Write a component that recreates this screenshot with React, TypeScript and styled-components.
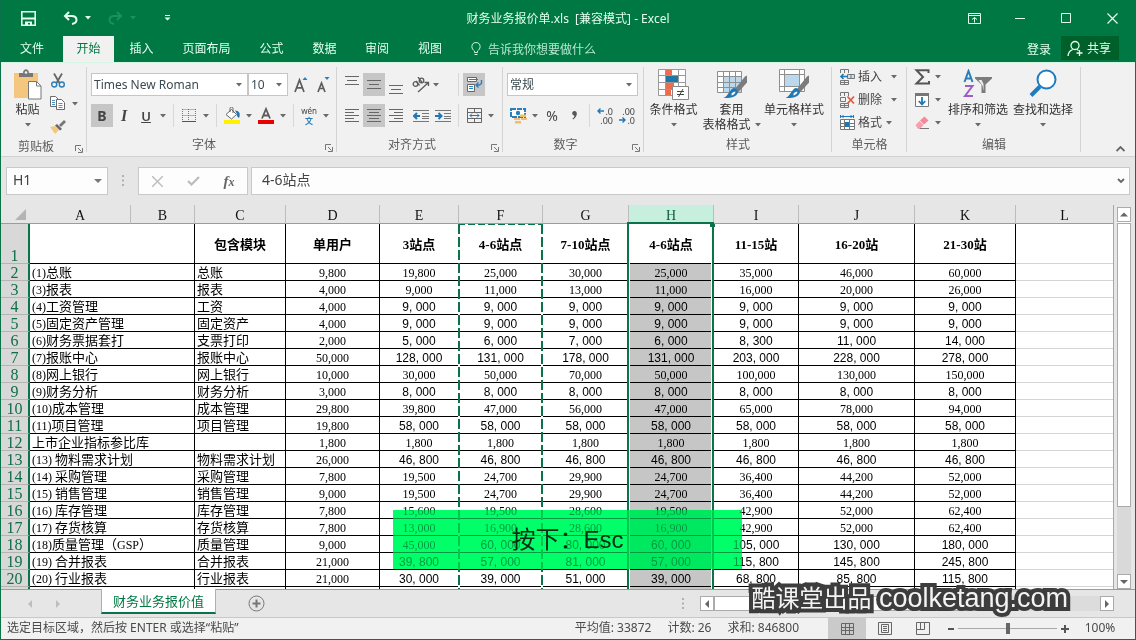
import React from "react";
import styled, { createGlobalStyle, css } from "styled-components";

const green = "#007843";
const deepGreen = "#0a7349";
const uiFont = `"Noto Sans", "Noto Sans CJK SC", sans-serif`;
const sheetFont = `"Liberation Serif", "Noto Sans CJK SC", serif`;

const GlobalStyle = createGlobalStyle`
  * { box-sizing: border-box; }
  body { margin: 0; font-family: ${uiFont}; font-size: 12px; color: #444; }
  button, input, select { font: inherit; color: inherit; margin: 0; padding: 0; border: 0; background: none; outline: none; }
  svg { display: block; flex: none; }
`;

/* ---------- window frame ---------- */

const Window = styled.div`
  position: relative;
  display: flex;
  flex-direction: column;
  height: 100vh;
  overflow: hidden;
  border: solid ${deepGreen};
  border-width: 0 1px 1px;
  background: #e6e6e6;
`;

const TitleBar = styled.header`
  display: grid;
  grid-template-columns: 1fr auto 1fr;
  align-items: center;
  height: 36px;
  flex: none;
  background: ${green};
  color: #e4fff0;
`;

const QuickAccess = styled.div`
  display: flex;
  align-items: center;
  padding-left: 19px;
`;

const Title = styled.h1`
  margin: 0;
  font-size: 12px;
  font-weight: 400;
  white-space: pre;
`;

const WindowButtons = styled.div`
  display: flex;
  justify-content: flex-end;
`;

const WindowButton = styled.button<{ $w?: number }>`
  display: flex;
  align-items: center;
  justify-content: center;
  width: ${(p) => p.$w ?? 46}px;
  height: 32px;
`;

const TabBar = styled.nav`
  display: flex;
  align-items: stretch;
  height: 26px;
  flex: none;
  padding-right: 16px;
  background: ${green};
  color: #e4fff0;
`;

const RibbonTab = styled.button<{ $active?: boolean; $w: number }>`
  width: ${(p) => p.$w}px;
  line-height: 24px;
  ${(p) => p.$active && css`background: #f1f1f1; color: ${green};`}
`;

const TellMe = styled.button`
  display: flex;
  align-items: center;
  gap: 7px;
  padding-left: 15px;
  color: #b5e8cf;
`;

const Account = styled.div`
  display: flex;
  margin-left: auto;
  gap: 10px;
`;

const ShareButton = styled.button`
  display: flex;
  align-items: center;
  gap: 3px;
  width: 58px;
  height: 24px;
  padding-left: 6px;
  background: #006029;
`;

/* ---------- ribbon ---------- */

const Ribbon = styled.section`
  display: flex;
  flex: none;
  height: 95px;
  border-top: 1px solid #d5f5e5;
  border-bottom: 1px solid #d2d2d2;
  background: #f1f1f1;
`;

const GroupBox = styled.div<{ $w: number }>`
  position: relative;
  display: flex;
  flex-direction: column;
  width: ${(p) => p.$w}px;
  flex: none;
  &::after {
    content: "";
    position: absolute;
    right: 0;
    top: 4px;
    bottom: 4px;
    width: 1px;
    background: #d4d4d4;
  }
`;

const GroupBody = styled.div<{ $top: number; $left?: number }>`
  display: flex;
  flex: 1;
  padding: ${(p) => p.$top}px 0 0 ${(p) => p.$left ?? 4}px;
`;

const GroupFooter = styled.div`
  display: flex;
  height: 20px;
  text-align: center;
  line-height: 18px;
  color: #5c5c5c;
  & > span { flex: 1; }
  & > button { width: 16px; padding: 3px 0 0 4px; }
`;

const Rows = styled.div<{ $gap?: number }>`
  display: flex;
  flex-direction: column;
  gap: ${(p) => p.$gap ?? 0}px;
`;

const Row = styled.div<{ $w?: number }>`
  display: flex;
  height: 23px;
  width: ${(p) => (p.$w ? p.$w + "px" : "auto")};
`;

const Cluster = styled.div<{ $left?: number }>`
  display: flex;
  margin-left: ${(p) => p.$left ?? 0}px;
`;

const EndCluster = styled.div`
  display: flex;
  width: 44px;
  margin-left: auto;
`;

const Tool = styled.button<{ $w?: number; $on?: boolean; $gap?: number }>`
  display: flex;
  align-items: center;
  justify-content: center;
  gap: ${(p) => p.$gap ?? 0}px;
  width: ${(p) => p.$w ?? 22}px;
  height: 23px;
  background: ${(p) => (p.$on ? "#c6c6c6" : "transparent")};
`;

const Divider = styled.span`
  width: 1px;
  height: 23px;
  margin: 0 4px;
  background: #d8d8d8;
`;

const LabelTool = styled.button<{ $gap: number }>`
  display: flex;
  align-items: center;
  height: 23px;
  gap: 3px;
  line-height: 16px;
  & > :last-child { margin-left: ${(p) => p.$gap}px; }
`;

const BigTool = styled.button<{ $w: number }>`
  display: flex;
  flex-direction: column;
  align-items: center;
  width: ${(p) => p.$w}px;
  height: 64px;
  line-height: 15px;
  white-space: nowrap;
  color: #333;
`;

const BigIcon = styled.span`
  display: flex;
  height: 33px;
`;

const BigLine = styled.span`
  display: flex;
  align-items: center;
  gap: 4px;
  height: 15px;
`;

const FindTools = styled.div`
  display: flex;
  gap: 5px;
  padding-top: 4px;
  margin-left: 7px;
`;

const Glyph = styled.span<{ $kind?: "bold" | "italic" | "underline" }>`
  font-size: 14px;
  line-height: 20px;
  ${(p) => p.$kind === "bold" && css`font-weight: 700;`}
  ${(p) => p.$kind === "italic" && css`font: italic 700 16px/20px "Liberation Serif", serif;`}
  ${(p) => p.$kind === "underline" && css`font-weight: 600; text-decoration: underline; font-size: 13px;`}
`;

const SelectFrame = styled.span<{ $w: number }>`
  display: grid;
  grid-template-columns: 1fr 16px;
  align-items: center;
  width: ${(p) => p.$w}px;
  height: 23px;
  border: 1px solid #c6c6c6;
  background: #fff;
  & > select {
    grid-area: 1 / 1 / 2 / 3;
    appearance: none;
    width: 100%;
    height: 21px;
    padding-left: 2px;
    color: #3c4a52;
  }
  & > svg { grid-area: 1 / 2; pointer-events: none; justify-self: center; }
`;

const CollapseButton = styled.button`
  margin: auto 10px 4px auto;
`;

/* ---------- formula bar ---------- */

const FormulaBar = styled.section`
  display: flex;
  align-items: center;
  flex: none;
  height: 48px;
  padding: 0 5px;
  color: #444;
`;

const Field = styled.div<{ $w?: number }>`
  display: flex;
  align-items: center;
  height: 28px;
  width: ${(p) => (p.$w ? p.$w + "px" : "auto")};
  flex: ${(p) => (p.$w ? "none" : "1")};
  border: 1px solid #c9c9c9;
  background: #fdfdfd;
  & > input {
    flex: 1;
    min-width: 0;
    padding-bottom: 2px;
    font-size: 14px;
    line-height: 22px;
  }
`;

const NameInput = styled.input`
  padding-left: 6px;
`;

const FormulaInput = styled.input`
  padding-left: 10px;
`;

const Grip = styled.span<{ $w: number }>`
  display: flex;
  justify-content: center;
  width: ${(p) => p.$w}px;
`;

/* ---------- worksheet ---------- */

const SheetArea = styled.main`
  display: flex;
  flex: 1;
  min-height: 0;
`;

const SheetView = styled.div`
  flex: 1;
  min-width: 0;
  overflow: hidden;
  border-right: 1px solid #a8a8a8;
`;

const Sheet = styled.table`
  width: 100%;
  table-layout: fixed;
  border-collapse: separate;
  border-spacing: 0;
  font-family: ${sheetFont};
  font-size: 12px;
  color: #000;
`;

const ColumnHead = styled.th<{ $selected?: boolean }>`
  position: relative;
  height: 19px;
  padding: 3px 0 0;
  border-right: 1px solid #bcbcbc;
  border-bottom: 1px solid #9c9c9c;
  background: ${(p) => (p.$selected ? "#c6f0dd" : "#e6e6e6")};
  color: ${(p) => (p.$selected ? "#0d5f3c" : "#111")};
  font-size: 14px;
  font-weight: 400;
  line-height: 15px;
  &:last-child { border-right: 0; }
`;

const Corner = styled.th`
  height: 19px;
  padding: 0 4px 3px 0;
  border-bottom: 1px solid #9c9c9c;
  vertical-align: bottom;
  & > svg { margin-left: auto; }
`;

const RowHead = styled.th`
  padding: 2px 0 0;
  border-right: 2px solid ${deepGreen};
  border-bottom: 1px solid #b4b4b4;
  background: #d8d8d8;
  color: #0f6e48;
  font-size: 16px;
  font-weight: 400;
  line-height: 14px;
  text-align: center;
  vertical-align: bottom;
`;

const BodyRow = styled.tr<{ $tall?: boolean }>`
  height: ${(p) => (p.$tall ? 40 : 17)}px;
`;

const Cell = styled.td<{ $align?: string; $filled?: boolean; $bold?: boolean; $wide?: boolean }>`
  padding: 2px 0 0 ${(p) => (p.$align === "left" ? 2 : 0)}px;
  border-right: 1px solid #000;
  border-bottom: 1px solid #000;
  background: ${(p) => (p.$filled ? "#c6c6c6" : "#fff")};
  font-size: ${(p) => (p.$bold ? 13 : 12)}px;
  font-weight: ${(p) => (p.$bold ? 700 : 400)};
  line-height: 14px;
  text-align: ${(p) => p.$align ?? "center"};
  white-space: pre;
  ${(p) => p.$wide && css`font-family: "Liberation Sans", sans-serif;`}
`;

const EmptyCell = styled.td`
  padding: 0;
  border-bottom: 1px solid #d4d4d4;
  background: #fff;
`;

const Han = styled.span`
  font-size: 13px;
  line-height: 14px;
  vertical-align: top;
`;

const CopyMarquee = styled.span`
  position: absolute;
  top: calc(100% + 1px);
  left: -1px;
  right: -1px;
  height: 2000px;
  background:
    repeating-linear-gradient(90deg, ${deepGreen} 0 7px, #fff 7px 10px) top / 100% 1px no-repeat,
    repeating-linear-gradient(180deg, ${deepGreen} 0 10px, #fff 10px 13px) left / 2px 100% no-repeat,
    repeating-linear-gradient(180deg, ${deepGreen} 0 10px, #fff 10px 13px) right / 2px 100% no-repeat;
`;

const SelectionFrame = styled.span`
  position: absolute;
  top: calc(100% - 1px);
  left: -2px;
  right: -1px;
  height: 2000px;
  border: 2px solid ${deepGreen};
  box-shadow: inset 0 0 0 1px #fff;
  &::after {
    content: "";
    position: absolute;
    top: -2px;
    right: -3px;
    width: 5px;
    height: 5px;
    background: ${deepGreen};
  }
`;

const VerticalScroll = styled.div`
  display: flex;
  flex-direction: column;
  width: 21px;
  padding: 2px 4px 0 3px;
`;

const ScrollButton = styled.button`
  display: flex;
  align-items: center;
  justify-content: center;
  width: 14px;
  height: 15px;
  flex: none;
  border: 1px solid #ababab;
  background: #fff;
`;

const VerticalTrack = styled.div`
  flex: 1;
  background: #d9d9d9;
  border-top: 1px solid #fff;
`;

const VerticalThumb = styled.div`
  height: 81%;
  border: 1px solid #ababab;
  background: #fff;
`;

/* ---------- sheet tabs and status bar ---------- */

const SheetBar = styled.footer`
  display: flex;
  align-items: center;
  flex: none;
  height: 28px;
  border-top: 1px solid #9c9c9c;
`;

const SheetNav = styled.div`
  display: flex;
  gap: 20px;
  width: 100px;
  padding-left: 25px;
`;

const SheetTab = styled.button`
  align-self: flex-start;
  width: 115px;
  height: 25px;
  margin-top: -1px;
  border-right: 1px solid #b0b0b0;
  border-left: 1px solid #b0b0b0;
  border-bottom: 2px solid ${deepGreen};
  background: #fff;
  color: ${green};
  font-size: 13px;
  line-height: 20px;
`;

const AddSheet = styled.button`
  margin-left: 32px;
`;

const HorizontalScroll = styled.div`
  display: flex;
  align-items: center;
  width: 457px;
  margin-left: auto;
  padding-right: 21px;
  & > :first-child { margin-right: 12px; }
`;

const HorizontalTrack = styled.div`
  flex: 1;
  height: 15px;
  background: #dcdcdc;
`;

const HorizontalThumb = styled.div`
  width: 71%;
  height: 15px;
  border: 1px solid #ababab;
  background: #fff;
`;

const StatusBar = styled.footer`
  display: flex;
  align-items: center;
  flex: none;
  height: 22px;
  padding-left: 6px;
  border-top: 1px solid #c8c8c8;
  background: #f1f1f1;
  color: #4a4a4a;
  line-height: 18px;
`;

const StatusText = styled.span`
  padding-bottom: 2px;
`;

const Summary = styled.div`
  display: flex;
  gap: 16px;
  margin-left: auto;
  margin-right: 29px;
`;

const ViewButton = styled.button<{ $on?: boolean }>`
  display: flex;
  align-items: center;
  justify-content: center;
  width: 38px;
  height: 21px;
  background: ${(p) => (p.$on ? "#cacaca" : "transparent")};
`;

const ZoomControls = styled.div`
  display: flex;
  align-items: center;
  margin-left: 5px;
`;

const ZoomSlider = styled.input`
  appearance: none;
  width: 99px;
  height: 11px;
  margin: 0 4px;
  background: linear-gradient(#a8a8a8, #a8a8a8) center / 100% 1px no-repeat;
  &::-webkit-slider-thumb {
    appearance: none;
    width: 4px;
    height: 11px;
    background: #666;
  }
`;

const ZoomValue = styled.button`
  width: 66px;
  padding: 0 4px 2px 0;
  text-align: center;
`;

/* ---------- captions over the window ---------- */

const Caption = styled.div`
  position: absolute;
  left: calc(50% - 175px);
  bottom: 70px;
  width: 349px;
  height: 59px;
  &::before, &::after { content: ""; position: absolute; inset: 0; }
  &::before { background: rgba(255, 255, 255, 0.6); }
  &::after { background: #00ff68; mix-blend-mode: multiply; }
`;

const CaptionText = styled.p`
  position: relative;
  z-index: 1;
  margin: 0;
  font: 24px/59px "Liberation Sans", "Noto Sans CJK SC", sans-serif;
  color: #062b12;
  text-align: center;
`;

const Watermark = styled.p`
  position: absolute;
  right: 67px;
  bottom: 23px;
  z-index: 2;
  margin: 0;
  font: 27px/34px "Liberation Sans", "Noto Sans CJK SC", sans-serif;
  color: #f4f4f4;
  white-space: nowrap;
  -webkit-text-stroke: 8px #3d3d3d;
  paint-order: stroke fill;
  stroke-linejoin: round;
  & > span { font-size: 24px; }
`;

/* ---------- icons ---------- */

const Caret = ({ color = "#6a6a6a" }: { color?: string }) => (
  <svg width="6" height="4" viewBox="0 0 6 4"><path d="M0 0h6L3 3.4z" fill={color} /></svg>
);

const Lines = ({ rows, w = 14 }: { rows: [number, number, number][]; w?: number }) => (
  <svg width={w} height="23" viewBox={`0 0 ${w} 23`} stroke="#666" strokeWidth="1">
    {rows.map(([x1, x2, y]) => <path key={y} d={`M${x1} ${y + 0.5}H${x2}`} />)}
  </svg>
);

const LauncherIcon = () => (
  <svg width="8" height="8" viewBox="0 0 8 8" fill="none" stroke="#777">
    <path d="M.5 6V.5H6M3 3l3.5 3.5M7.5 3v4.5H3" />
  </svg>
);

const SaveIcon = () => (
  <svg width="15" height="15" viewBox="0 0 15 15">
    <path d="M.8.8h13.4v13.4H.8z" fill="none" stroke="#e4fff0" strokeWidth="1.6" />
    <path d="M1 6.5h13v2H1zM4 10.500h7v4H9V12H7v2.500H4z" fill="#e4fff0" />
  </svg>
);

const UndoIcon = ({ color = "#e4fff0", flip = false }: { color?: string; flip?: boolean }) => (
  <svg width="15" height="14" viewBox="0 0 15 14" fill="none" stroke={color} strokeWidth="2" transform={flip ? "scale(-1 1)" : undefined}>
    <path d="M6 1L2 5l4 4M2 5h6.5c3 0 5 1.600 5 4 0 2-1.500 3.500-4.500 4" />
  </svg>
);

const CustomizeIcon = () => (
  <svg width="7" height="6" viewBox="0 0 7 6" fill="#e4fff0"><path d="M1 0h5v1H1zM.5 2.500h6l-3 3z" /></svg>
);

const BulbIcon = () => (
  <svg width="10" height="14" viewBox="0 0 10 14" fill="none" stroke="#c8f3dd">
    <path d="M3.500 10.500V9C2 7.800.9 6.600.9 4.700a4.100 4.100 0 0 1 8.200 0C9.100 6.600 8 7.800 6.500 9v1.500zM3.500 12.500h3" />
  </svg>
);

const ShareIcon = () => (
  <svg width="17" height="17" viewBox="0 0 17 17" fill="none" stroke="#e4fff0" strokeWidth="1.300">
    <circle cx="8" cy="5.500" r="4" /><path d="M1 16c.3-3.500 2-5.500 4.800-6.500M10 9.500l1.500 1M12.500 10v6M9.500 13h6" />
  </svg>
);

const PasteIcon = () => (
  <svg width="29" height="31" viewBox="0 0 29 31">
    <path d="M1 4h24v25H1z" fill="#f5c77e" />
    <path d="M6 8V4h4c0-5 6-5 6 0h4v4z" fill="#777" /><circle cx="13" cy="3.500" r="1.300" fill="#f1f1f1" />
    <path d="M15.500 12.500h8l4.500 4.500v13H15.500z" fill="#fff" stroke="#777" /><path d="M23.500 12.500V17H28" fill="none" stroke="#777" />
  </svg>
);

const CutIcon = () => (
  <svg width="14" height="15" viewBox="0 0 14 15" fill="none">
    <path d="M3 .5l5.500 9.500M11 .5L5.500 10" stroke="#666" strokeWidth="1.800" />
    <circle cx="3.200" cy="11.500" r="2.500" stroke="#2a7fb8" strokeWidth="1.400" /><circle cx="10.800" cy="11.500" r="2.500" stroke="#2a7fb8" strokeWidth="1.400" />
  </svg>
);

const CopyIcon = () => (
  <svg width="16" height="15" viewBox="0 0 16 15" fill="#fff" stroke="#6a6a6a">
    <path d="M.5.500h5l3 3v7H.5z" /><path d="M6.500 3.500h5l3 3v7h-8z" />
    <path d="M2 4.500h3M2 6.500h3M2 8.500h3M8.500 7.500h4M8.500 9.500h4M8.500 11.500h4" stroke="#4b93c4" />
  </svg>
);

const BrushIcon = () => (
  <svg width="16" height="14" viewBox="0 0 16 14">
    <path d="M0 7l5-1 4 4-4 4z" fill="#f5c77e" /><path d="M5 5.500l2-1.500 5 5-2 1.500z" fill="#666" /><path d="M9 5l5-5 2 2-5 5z" fill="#777" />
  </svg>
);

const FontSizeIcon = ({ up }: { up: boolean }) => (
  <svg width="15" height="17" viewBox="0 0 15 17">
    <path d={up ? "M1 16L5.500 4 10 16M2.700 11.800h5.700" : "M2 16L5.500 7 9 16M3.500 12.500h4.200"} fill="none" stroke="#5c5c5c" strokeWidth="1.700" />
    <path d={up ? "M8.500 4l2.500-3 2.500 3z" : "M8.500 1h5L11 4z"} fill="#2a7fb8" />
  </svg>
);

const BordersIcon = () => (
  <svg width="14" height="14" viewBox="0 0 14 14" stroke="#777" strokeDasharray="1 1" fill="none">
    <path d="M.5.500h13M.5 6.500h13M.5 0v12M6.500 0v12M13.500 0v12" /><path d="M0 12.500h14" stroke="#555" strokeDasharray="none" />
  </svg>
);

const FillIcon = () => (
  <svg width="17" height="17" viewBox="0 0 17 17">
    <path d="M2 7.500L7.500 2.500l5 5-5 4.500z" fill="#fff" stroke="#666" /><path d="M6 5V1.500a1.500 1.500 0 0 1 3 0V6" fill="none" stroke="#666" />
    <path d="M11 3.500c4 0 6 3 4 7.500-2-1-2.500-3-2-4z" fill="#1f77b4" /><path d="M0 13h16v4H0z" fill="#fff200" />
  </svg>
);

const FontColorIcon = () => (
  <svg width="16" height="17" viewBox="0 0 16 17">
    <path d="M4 11.500L8 2l4 9.500M5.500 8.500h5" fill="none" stroke="#5c5c5c" strokeWidth="1.800" /><path d="M0 13h16v4H0z" fill="#e80000" />
  </svg>
);

const PhoneticBox = styled.span`
  display: flex;
  flex-direction: column;
  align-items: center;
  font-size: 8px;
  line-height: 10px;
  & > b { color: #2a7fb8; }
`;

const OrientationIcon = () => (
  <svg width="18" height="16" viewBox="0 0 18 16">
    <g fill="none" stroke="#5c5c5c" strokeWidth="1.300">
      <circle cx="3.500" cy="7" r="2.300" /><path d="M4 4l3.500 4.500M6 0l4.500 6" /><circle cx="9.500" cy="3.500" r="2.300" /><path d="M6 15L16 6M12.500 5.500H16.500V9" />
    </g>
  </svg>
);

const WrapIcon = () => (
  <svg width="17" height="17" viewBox="0 0 17 17" fill="#fff" stroke="#666">
    <path d="M1.500 1.500h9v4h-9zM1.500 8.500h7v7h-7z" /><path d="M3 3.500h9M3 10.500h4M3 12.500h4" stroke="#2a7fb8" />
    <path d="M15.500 4v3.500l-2 1.500h-3M12.500 6.500L10 9l2.500 2.500" stroke="#2a7fb8" fill="none" strokeWidth="1.400" />
  </svg>
);

const IndentIcon = ({ out }: { out: boolean }) => (
  <svg width="16" height="14" viewBox="0 0 16 14" fill="none" stroke="#777">
    <path d="M0 1.500h16M9 4.500h7M9 7.500h7M9 9.500h7M0 12.500h16" />
    <path d={out ? "M7 7H1M4 4L1 7l3 3" : "M0 7h6M3.500 4l3 3-3 3"} stroke="#1f77b4" strokeWidth="2" />
  </svg>
);

const MergeIcon = () => (
  <svg width="15" height="15" viewBox="0 0 15 15" fill="none" stroke="#666">
    <path d="M.5.500h14v14H.5zM.5 4.500h14M.5 10.500h14M7.500 0v4M7.500 11v4" /><path d="M3 7.500h9M5 5.500l-2 2 2 2M10 5.500l2 2-2 2" stroke="#1f77b4" />
  </svg>
);

const CurrencyIcon = () => (
  <svg width="17" height="16" viewBox="0 0 17 16">
    <path d="M1 1h14v8H1z" fill="#fff" stroke="#2a7fb8" strokeWidth="2" strokeDasharray="5 1" /><circle cx="8" cy="5" r="2.200" fill="#2a7fb8" />
    <path d="M10 6.500h6v2.500h-6zM11 10h6v2h-6zM4 10h6v2H4zM5 13h6v2.500H5z" fill="#f2bd6b" />
  </svg>
);

const CommaIcon = () => (
  <svg width="5" height="9" viewBox="0 0 5 9"><path d="M2.500 0C6 0 5.500 6 1 8.500L.5 7.500C2 6.500 2.500 5.500 2.300 4.500-.5 4.500-.5 0 2.500 0z" fill="#555" /></svg>
);

const DecimalBox = styled.span`
  display: flex;
  flex-direction: column;
  width: 16px;
  font-size: 9px;
  line-height: 9px;
  & > span { display: flex; align-items: center; justify-content: flex-end; gap: 1px; }
`;

const DecimalArrow = ({ right }: { right?: boolean }) => (
  <svg width="7" height="6" viewBox="0 0 7 6" fill="none" stroke="#1f77b4" strokeWidth="1.400">
    <path d={right ? "M0 3h6M3.500.500L6 3 3.500 5.500" : "M7 3H1M3.500.500L1 3l2.500 2.500"} />
  </svg>
);

const ConditionalIcon = () => (
  <svg width="32" height="31" viewBox="0 0 32 31">
    <path d="M.5.500h27v26H.5z" fill="#fff" />
    <path d="M8 1h6v6H8zM8 14h8v6H8z" fill="#ee6b4d" /><path d="M8 7h12v6H8z" fill="#1f77a8" /><path d="M8 20h5v6H8z" fill="#ee6b4d" />
    <path d="M.5.500h27v26H.5zM.5 6.500h27M.5 13.500h27M.5 20.500h27M7.500 0v27M20.500 0v27" fill="none" stroke="#999" />
    <path d="M14.500 17.500h16v13h-16z" fill="#fff" stroke="#888" /><path d="M19 22.500h7M19 25.500h7M25 20l-4.500 8" stroke="#444" fill="none" />
  </svg>
);

const PaintBrush = () => (
  <>
    <path d="M18 20L28 7.500l2-1v7L21.500 23z" fill="#7c7c7c" />
    <path d="M15.500 19.500c1-1 2.500-.5 4 1s2 2.500 1 4c-2.500 4-8 5-14 4.500 4.500-2 5-6 9-9.500z" fill="#1f77b4" />
    <path d="M14.500 24.500c1.500-1.500 3-2 4-1.500-.5 2-2 3-4 3.500z" fill="#fff" />
  </>
);

const TableStyleIcon = () => (
  <svg width="30" height="31" viewBox="0 0 30 31">
    <path d="M.5 2.500h24v21H.5z" fill="#fff" /><path d="M7 8h18v16H7z" fill="#bcd8ec" />
    <path d="M.5 2.500h24v21H.5zM.5 7.500h24M.5 13.500h24M.5 18.500h24M6.500 2v22M12.500 2v22M18.500 2v22" fill="none" stroke="#8f8f8f" />
    <PaintBrush />
  </svg>
);

const CellStyleIcon = () => (
  <svg width="30" height="31" viewBox="0 0 30 31">
    <path d="M.5.500h25v22H.5z" fill="#fff" /><path d="M6 6h14v11H6z" fill="#bcd8ec" />
    <path d="M.5.500h25v22H.5zM.5 5.500h25M.5 17.500h25M5.500 0v23M20.500 0v23" fill="none" stroke="#8f8f8f" />
    <PaintBrush />
  </svg>
);

const CellsIcon = ({ kind }: { kind: "insert" | "delete" | "format" }) => (
  <svg width="16" height="16" viewBox="0 0 16 16" fill="none" stroke="#777">
    {kind === "format" ? (
      <>
        <path d="M1.500 4.500h14v10h-14zM1.500 8.500h14M1.500 11.500h14M5.500 5v10M10.500 5v10" fill="#fff" />
        <path d="M6 7h4v5H6z" fill="#1f77b4" stroke="none" /><path d="M2 1.500h12M1.500 0v3M14.500 0v3M4.500 0L3 1.500 4.500 3M11.500 0L13 1.500 11.500 3" stroke="#1f77b4" />
      </>
    ) : (
      <>
        <path d="M1.500 4V.500h8V4M5.500.500V4M1.500 15.500v-4h8v4zM5.500 11.500v4M1.500 13.500h8" />
        {kind === "insert" ? (
          <><path d="M8.500 5.500h7v4h-7zM12 5.500v4" fill="#cfe0ec" /><path d="M9 7.500H2M4.500 5L2 7.500 4.500 10" stroke="#1f77b4" strokeWidth="1.600" /></>
        ) : (
          <><path d="M1.500 5.500h5v4h-5z" /><path d="M8.500 4.500l6.500 7M15 4.500l-6.500 7" stroke="#e0583c" strokeWidth="1.700" /></>
        )}
      </>
    )}
  </svg>
);

const SumIcon = () => (
  <svg width="16" height="16" viewBox="0 0 16 16"><path d="M14.500 4V1.200H2.500L9 8l-6.500 6.500h12.500V12" fill="none" stroke="#555" strokeWidth="2" /></svg>
);

const FillDownIcon = () => (
  <svg width="16" height="16" viewBox="0 0 16 16"><path d="M1.500 1.500h13v13h-13z" fill="#fff" stroke="#777" /><path d="M1 1h14v3H1z" fill="#777" /><path d="M8 5v7M4.800 9L8 12.500 11.200 9" fill="none" stroke="#1f77b4" strokeWidth="1.800" /></svg>
);

const EraserIcon = () => (
  <svg width="16" height="14" viewBox="0 0 16 14"><path d="M6 4.500L10.500.500l4 4L10 8.500z" fill="#f4899a" /><path d="M1.500 9L5.500 5l4 4-3.500 4H4z" fill="#f6a0ad" /><path d="M6 12.500h9" stroke="#777" /></svg>
);

const SortIcon = () => (
  <svg width="30" height="31" viewBox="0 0 30 31" fill="none">
    <path d="M1.500 13L5.500 2l4 11M3 9.500h5" stroke="#2a7fb8" strokeWidth="2" /><path d="M2 17h7.500L2 27h8" stroke="#9a5fc0" strokeWidth="2" />
    <path d="M12 8h17v1.500l-6.500 6V24h-4v-8.500l-6.500-6z" fill="#7c7c7c" /><path d="M19.500 16.500l-4-5.500h3l2 4v7z" fill="#f1f1f1" />
  </svg>
);

const FindIcon = () => (
  <svg width="28" height="31" viewBox="0 0 28 31" fill="none" stroke="#1f7dbf"><circle cx="17.500" cy="10.500" r="9" fill="#fff" strokeWidth="2" /><path d="M11 17.500L2 26.500" strokeWidth="4" /></svg>
);

const CancelIcon = () => <svg width="11" height="11" viewBox="0 0 11 11" stroke="#bcbcbc" strokeWidth="1.400"><path d="M0 0l11 11M11 0L0 11" /></svg>;
const AcceptIcon = () => <svg width="13" height="10" viewBox="0 0 13 10" fill="none" stroke="#bcbcbc" strokeWidth="2.200"><path d="M1 5l3.500 3.500L12 1" /></svg>;

const FxText = styled.span`
  font: italic 700 15px/20px "Liberation Serif", serif;
  color: #666;
  & > sub { font-size: 12px; vertical-align: baseline; }
`;

const Dots = () => (
  <svg width="3" height="12" viewBox="0 0 3 12" fill="#b0b0b0"><path d="M0 0h2v2H0zM0 4.500h2v2H0zM0 9h2v2H0z" /></svg>
);

const Triangle = ({ dir, color = "#666" }: { dir: "up" | "down" | "left" | "right"; color?: string }) => {
  const d = { up: "M0 5.500h8L4 1.500z", down: "M0 2h8L4 6z", left: "M6 0v8L2 4z", right: "M2 0v8l4-4z" }[dir];
  return <svg width="8" height="8" viewBox="0 0 8 8"><path d={d} fill={color} /></svg>;
};

/* ---------- worksheet data ---------- */

const columns: [string, number][] = [
  ["A", 101], ["B", 64], ["C", 91], ["D", 94], ["E", 79], ["F", 84],
  ["G", 86], ["H", 85], ["I", 85], ["J", 116], ["K", 101],
];

const headings = ["包含模块", "单用户", "3站点", "4-6站点", "7-10站点", "4-6站点", "11-15站", "16-20站", "21-30站"];

const repeat = (value: string, n: number) => Array<string>(n).fill(value);

const records: [string, string, string, string[]][] = [
  ["(1)总账", "总账", "9,800", ["19,800", "25,000", "30,000", "25,000", "35,000", "46,000", "60,000"]],
  ["(3)报表", "报表", "4,000", ["9,000", "11,000", "13,000", "11,000", "16,000", "20,000", "26,000"]],
  ["(4)工资管理", "工资", "4,000", repeat("9, 000", 7)],
  ["(5)固定资产管理", "固定资产", "4,000", repeat("9, 000", 7)],
  ["(6)财务票据套打", "支票打印", "2,000", ["5, 000", "6, 000", "7, 000", "6, 000", "8, 300", "11, 000", "14, 000"]],
  ["(7)报账中心", "报账中心", "50,000", ["128, 000", "131, 000", "178, 000", "131, 000", "203, 000", "228, 000", "278, 000"]],
  ["(8)网上银行", "网上银行", "10,000", ["30,000", "50,000", "70,000", "50,000", "100,000", "130,000", "150,000"]],
  ["(9)财务分析", "财务分析", "3,000", repeat("8, 000", 7)],
  ["(10)成本管理", "成本管理", "29,800", ["39,800", "47,000", "56,000", "47,000", "65,000", "78,000", "94,000"]],
  ["(11)项目管理", "项目管理", "19,800", repeat("58, 000", 7)],
  ["上市企业指标参比库", "", "1,800", repeat("1,800", 7)],
  ["(13) 物料需求计划", "物料需求计划", "26,000", repeat("46, 800", 7)],
  ["(14) 采购管理", "采购管理", "7,800", ["19,500", "24,700", "29,900", "24,700", "36,400", "44,200", "52,000"]],
  ["(15) 销售管理", "销售管理", "9,000", ["19,500", "24,700", "29,900", "24,700", "36,400", "44,200", "52,000"]],
  ["(16) 库存管理", "库存管理", "7,800", ["15,600", "19,500", "28,600", "19,500", "42,900", "52,000", "62,400"]],
  ["(17) 存货核算", "存货核算", "7,800", ["13,000", "16,900", "28,600", "16,900", "42,900", "52,000", "62,400"]],
  ["(18)质量管理（GSP）", "质量管理", "9,000", ["45,000", "60, 000", "80, 000", "60, 000", "105, 000", "130, 000", "180, 000"]],
  ["(19) 合并报表", "合并报表", "21,000", ["39, 800", "57, 000", "81, 000", "57, 000", "115, 800", "145, 800", "245, 800"]],
  ["(20) 行业报表", "行业报表", "21,000", ["30, 000", "39, 000", "51, 000", "39, 000", "68, 800", "85, 800", "115, 800"]],
];

/* Chinese runs are set one pixel larger than the Latin ones beside them. */
const Mixed = ({ text }: { text: string }) => (
  <>
    {text.split(/([^\x00-\x7f]+)/).map((run, i) => (i % 2 ? <Han key={i}>{run}</Han> : run))}
  </>
);

/* ---------- parts ---------- */

const Group = ({ label, w, top, left, launcher, children }: {
  label: string; w: number; top: number; left?: number; launcher?: boolean; children: React.ReactNode;
}) => (
  <GroupBox $w={w}>
    <GroupBody $top={top} $left={left}>{children}</GroupBody>
    <GroupFooter>
      <span>{label}</span>
      {launcher && <button aria-label={`${label}设置`}><LauncherIcon /></button>}
    </GroupFooter>
  </GroupBox>
);

const Picker = ({ label, value, w }: { label: string; value: string; w: number }) => (
  <SelectFrame $w={w}>
    <select aria-label={label}><option>{value}</option></select>
    <Caret />
  </SelectFrame>
);

const Drop = ({ label }: { label: string }) => <Tool $w={12} aria-label={label}><Caret /></Tool>;

const Big = ({ icon, w, first, second }: { icon: React.ReactNode; w: number; first: string; second?: string }) => (
  <BigTool $w={w}>
    <BigIcon>{icon}</BigIcon>
    <BigLine>{first}</BigLine>
    <BigLine>{second}<Caret /></BigLine>
  </BigTool>
);

const tabs: [string, number, boolean?][] = [
  ["文件", 62], ["开始", 51, true], ["插入", 55], ["页面布局", 75], ["公式", 55], ["数据", 51], ["审阅", 54], ["视图", 52],
];

export default function App() {
  return (
    <Window>
      <GlobalStyle />
      <TitleBar>
        <QuickAccess>
          <WindowButton $w={16} aria-label="保存"><SaveIcon /></WindowButton>
          <Cluster $left={25}>
            <WindowButton $w={18} aria-label="撤消"><UndoIcon /></WindowButton>
            <WindowButton $w={18} aria-label="撤消列表"><Caret color="#e4fff0" /></WindowButton>
          </Cluster>
          <Cluster $left={9}>
            <WindowButton $w={18} aria-label="恢复"><UndoIcon color="#18935e" flip /></WindowButton>
            <WindowButton $w={18} aria-label="恢复列表"><Caret color="#18935e" /></WindowButton>
          </Cluster>
          <Cluster $left={9}>
            <WindowButton $w={32} aria-label="自定义快速访问工具栏"><CustomizeIcon /></WindowButton>
          </Cluster>
        </QuickAccess>
        <Title>财务业务报价单.xls  [兼容模式] - Excel</Title>
        <WindowButtons>
          <WindowButton aria-label="功能区显示选项">
            <svg width="13" height="11" viewBox="0 0 13 11" fill="none" stroke="#e4fff0"><path d="M.5.500h12v10H.5zM.5 2.500h12M6.500 9.500v-5M4 6.500l2.500-2L9 6.500" /></svg>
          </WindowButton>
          <WindowButton aria-label="最小化"><svg width="10" height="1"><path d="M0 0h10v1H0z" fill="#e4fff0" /></svg></WindowButton>
          <WindowButton aria-label="最大化"><svg width="10" height="10" fill="none" stroke="#e4fff0"><path d="M.5.500h9v9h-9z" /></svg></WindowButton>
          <WindowButton aria-label="关闭"><svg width="11" height="11" stroke="#e4fff0" strokeWidth="1.200"><path d="M.5.500l10 10M10.500.500l-10 10" /></svg></WindowButton>
        </WindowButtons>
      </TitleBar>

      <TabBar>
        {tabs.map(([name, w, active]) => <RibbonTab key={name} $w={w} $active={active}>{name}</RibbonTab>)}
        <TellMe><BulbIcon />告诉我你想要做什么</TellMe>
        <Account>
          <button>登录</button>
          <ShareButton><ShareIcon />共享</ShareButton>
        </Account>
      </TabBar>

      <Ribbon>
        <Group label="剪贴板" w={86} top={6} left={7} launcher>
          <Big icon={<PasteIcon />} w={39} first="粘贴" />
          <Rows>
            <Row><Tool aria-label="剪切"><CutIcon /></Tool></Row>
            <Row><Tool aria-label="复制"><CopyIcon /></Tool><Drop label="复制选项" /></Row>
            <Row><Tool aria-label="格式刷"><BrushIcon /></Tool></Row>
          </Rows>
        </Group>

        <Group label="字体" w={250} top={10} launcher>
          <Rows $gap={8}>
            <Row>
              <Picker label="字体" value="Times New Roman" w={157} />
              <Picker label="字号" value="10" w={40} />
              <Cluster $left={2}>
                <Tool aria-label="增大字号"><FontSizeIcon up /></Tool>
                <Tool aria-label="减小字号"><FontSizeIcon up={false} /></Tool>
              </Cluster>
            </Row>
            <Row>
              <Tool $on><Glyph $kind="bold">B</Glyph></Tool>
              <Tool><Glyph $kind="italic">I</Glyph></Tool>
              <Tool><Glyph $kind="underline">U</Glyph></Tool>
              <Drop label="下划线" />
              <Divider />
              <Tool aria-label="边框"><BordersIcon /></Tool>
              <Drop label="边框选项" />
              <Divider />
              <Tool aria-label="填充颜色"><FillIcon /></Tool>
              <Drop label="填充颜色选项" />
              <Tool aria-label="字体颜色"><FontColorIcon /></Tool>
              <Drop label="字体颜色选项" />
              <Divider />
              <Tool><PhoneticBox><span>wén</span><b>文</b></PhoneticBox></Tool>
              <Drop label="拼音选项" />
            </Row>
          </Rows>
        </Group>

        <Group label="对齐方式" w={166} top={10} launcher>
          <Rows $gap={8}>
            <Row $w={157}>
              <Tool aria-label="顶端对齐"><Lines rows={[[0, 14, 3], [2, 12, 7], [0, 14, 11]]} /></Tool>
              <Tool $on aria-label="垂直居中"><Lines rows={[[0, 14, 7], [2, 12, 11], [0, 14, 15]]} /></Tool>
              <Tool aria-label="底端对齐"><Lines rows={[[0, 14, 12], [2, 12, 16], [0, 14, 20]]} /></Tool>
              <Cluster $left={3}><Tool $w={31} $gap={3} aria-label="方向"><OrientationIcon /><Caret /></Tool></Cluster>
              <EndCluster><Divider /><Tool $on aria-label="自动换行"><WrapIcon /></Tool></EndCluster>
            </Row>
            <Row $w={157}>
              <Tool aria-label="左对齐"><Lines rows={[[0, 14, 5], [0, 9, 8], [0, 14, 11], [0, 9, 14], [0, 14, 17]]} /></Tool>
              <Tool $on aria-label="居中"><Lines rows={[[0, 14, 5], [2, 12, 8], [0, 14, 11], [2, 12, 14], [0, 14, 17]]} /></Tool>
              <Tool aria-label="右对齐"><Lines rows={[[0, 14, 5], [5, 14, 8], [0, 14, 11], [5, 14, 14], [0, 14, 17]]} /></Tool>
              <Cluster $left={3}>
                <Tool aria-label="减少缩进量"><IndentIcon out /></Tool>
                <Tool aria-label="增加缩进量"><IndentIcon out={false} /></Tool>
              </Cluster>
              <EndCluster><Divider /><Tool aria-label="合并后居中"><MergeIcon /></Tool><Drop label="合并选项" /></EndCluster>
            </Row>
          </Rows>
        </Group>

        <Group label="数字" w={141} top={10} launcher>
          <Rows $gap={8}>
            <Row><Picker label="数字格式" value="常规" w={131} /></Row>
            <Row>
              <Tool aria-label="会计数字格式"><CurrencyIcon /></Tool>
              <Drop label="会计数字格式选项" />
              <Tool><Glyph>%</Glyph></Tool>
              <Tool aria-label="千位分隔样式"><CommaIcon /></Tool>
              <Divider />
              <Tool><DecimalBox><span><DecimalArrow />.0</span><span>.00</span></DecimalBox></Tool>
              <Tool><DecimalBox><span>.00</span><span><DecimalArrow right />.0</span></DecimalBox></Tool>
            </Row>
          </Rows>
        </Group>

        <Group label="样式" w={188} top={6} left={1}>
          <Big icon={<ConditionalIcon />} w={57} first="条件格式" />
          <Big icon={<TableStyleIcon />} w={59} first="套用" second="表格格式" />
          <Big icon={<CellStyleIcon />} w={66} first="单元格样式" />
        </Group>

        <Group label="单元格" w={75} top={2} left={7}>
          <Rows>
            <LabelTool $gap={6}><CellsIcon kind="insert" />插入<Caret /></LabelTool>
            <LabelTool $gap={6}><CellsIcon kind="delete" />删除<Caret /></LabelTool>
            <LabelTool $gap={1}><CellsIcon kind="format" />格式<Caret /></LabelTool>
          </Rows>
        </Group>

        <Group label="编辑" w={174} top={2} left={7}>
          <Rows>
            <LabelTool $gap={2} aria-label="自动求和"><SumIcon /><Caret /></LabelTool>
            <LabelTool $gap={2} aria-label="填充"><FillDownIcon /><Caret /></LabelTool>
            <LabelTool $gap={2} aria-label="清除"><EraserIcon /><Caret /></LabelTool>
          </Rows>
          <FindTools>
            <Big icon={<SortIcon />} w={60} first="排序和筛选" />
            <Big icon={<FindIcon />} w={60} first="查找和选择" />
          </FindTools>
        </Group>

        <CollapseButton aria-label="折叠功能区">
          <svg width="9" height="6" viewBox="0 0 9 6" fill="none" stroke="#666" strokeWidth="1.800"><path d="M.5 5l4-4 4 4" /></svg>
        </CollapseButton>
      </Ribbon>

      <FormulaBar>
        <Field $w={102}>
          <NameInput aria-label="名称框" defaultValue="H1" />
          <Tool $w={18} aria-label="名称列表"><Triangle dir="down" color="#777" /></Tool>
        </Field>
        <Grip $w={30}><Dots /></Grip>
        <Field $w={110}>
          <Tool $w={36} aria-label="取消"><CancelIcon /></Tool>
          <Tool $w={36} aria-label="输入"><AcceptIcon /></Tool>
          <Tool $w={36}><FxText>f<sub>x</sub></FxText></Tool>
        </Field>
        <Grip $w={3} />
        <Field>
          <FormulaInput aria-label="编辑栏" defaultValue="4-6站点" />
          <Tool $w={16} aria-label="展开编辑栏">
            <svg width="8" height="6" viewBox="0 0 8 6" fill="none" stroke="#666" strokeWidth="1.800"><path d="M1 1l3 3 3-3" /></svg>
          </Tool>
        </Field>
      </FormulaBar>

      <SheetArea>
        <SheetView>
          <Sheet>
            <colgroup>
              <col width={29} />
              {columns.map(([name, w]) => <col key={name} width={w} />)}
              <col />
            </colgroup>
            <thead>
              <tr>
                <Corner><svg width="11" height="11" viewBox="0 0 11 11"><path d="M11 0v11H0z" fill="#b4b4b4" /></svg></Corner>
                {columns.map(([name]) => (
                  <ColumnHead key={name} $selected={name === "H"}>
                    {name}
                    {name === "F" && <CopyMarquee />}
                    {name === "H" && <SelectionFrame />}
                  </ColumnHead>
                ))}
                <ColumnHead>L</ColumnHead>
              </tr>
            </thead>
            <tbody>
              <BodyRow $tall>
                <RowHead>1</RowHead>
                <Cell colSpan={2} />
                {headings.map((text, i) => <Cell key={i} $bold><Mixed text={text} /></Cell>)}
                <EmptyCell />
              </BodyRow>
              {records.map(([name, module, single, prices], r) => (
                <BodyRow key={r}>
                  <RowHead>{r + 2}</RowHead>
                  <Cell colSpan={2} $align="left"><Mixed text={name} /></Cell>
                  <Cell $align="left"><Mixed text={module} /></Cell>
                  <Cell>{single}</Cell>
                  {prices.map((price, i) => (
                    <Cell key={i} $filled={i === 3} $wide={price.includes(" ")}>{price}</Cell>
                  ))}
                  <EmptyCell />
                </BodyRow>
              ))}
              <BodyRow>
                <RowHead />
                <Cell colSpan={2} />
                {headings.map((_, i) => <Cell key={i} $filled={i === 5} />)}
                <EmptyCell />
              </BodyRow>
            </tbody>
          </Sheet>
        </SheetView>
        <VerticalScroll>
          <ScrollButton aria-label="向上滚动"><Triangle dir="up" /></ScrollButton>
          <VerticalTrack><VerticalThumb /></VerticalTrack>
          <ScrollButton aria-label="向下滚动"><Triangle dir="down" /></ScrollButton>
        </VerticalScroll>
      </SheetArea>

      <SheetBar>
        <SheetNav>
          <button aria-label="上一张工作表"><Triangle dir="left" color="#bdbdbd" /></button>
          <button aria-label="下一张工作表"><Triangle dir="right" color="#bdbdbd" /></button>
        </SheetNav>
        <SheetTab>财务业务报价值</SheetTab>
        <AddSheet aria-label="新工作表">
          <svg width="17" height="17" viewBox="0 0 17 17" fill="none" stroke="#777"><circle cx="8.500" cy="8.500" r="7.500" /><path d="M4.500 8.500h8M8.500 4.500v8" strokeWidth="2" /></svg>
        </AddSheet>
        <HorizontalScroll>
          <Grip $w={10}><Dots /></Grip>
          <ScrollButton aria-label="向左滚动"><Triangle dir="left" /></ScrollButton>
          <HorizontalTrack><HorizontalThumb /></HorizontalTrack>
          <ScrollButton aria-label="向右滚动"><Triangle dir="right" /></ScrollButton>
        </HorizontalScroll>
      </SheetBar>

      <StatusBar>
        <StatusText>选定目标区域，然后按 ENTER 或选择“粘贴”</StatusText>
        <Summary>
          <StatusText>平均值: 33872</StatusText>
          <StatusText>计数: 26</StatusText>
          <StatusText>求和: 846800</StatusText>
        </Summary>
        <ViewButton $on aria-label="普通">
          <svg width="13" height="12" viewBox="0 0 13 12" fill="none" stroke="#666"><path d="M.5.500h12v11H.5zM.5 4.500h12M.5 7.500h12M4.500 0v12M8.500 0v12" /></svg>
        </ViewButton>
        <ViewButton aria-label="页面布局">
          <svg width="14" height="13" viewBox="0 0 14 13" fill="none" stroke="#666"><path d="M.5.500h13v12H.5zM3.500 2.500h7v8h-7zM5 4.500h4M5 6.500h4M5 8.500h4" /></svg>
        </ViewButton>
        <ViewButton aria-label="分页预览">
          <svg width="14" height="13" viewBox="0 0 14 13" fill="none" stroke="#666"><path d="M.5.500h13v12H.5zM.5 7.500h8V.500M4.500.500v7" /></svg>
        </ViewButton>
        <ZoomControls>
          <button aria-label="缩小"><svg width="7" height="7"><path d="M1 3h6v2H1z" fill="#555" /></svg></button>
          <ZoomSlider type="range" min="10" max="190" defaultValue="100" aria-label="显示比例" />
          <button aria-label="放大"><svg width="8" height="8"><path d="M0 3h8v2H0zM3 0h2v8H3z" fill="#555" /></svg></button>
          <ZoomValue>100%</ZoomValue>
        </ZoomControls>
      </StatusBar>

      <Caption><CaptionText>按下：Esc</CaptionText></Caption>
      <Watermark><span>酷课堂出品</span> coolketang.com</Watermark>
    </Window>
  );
}
